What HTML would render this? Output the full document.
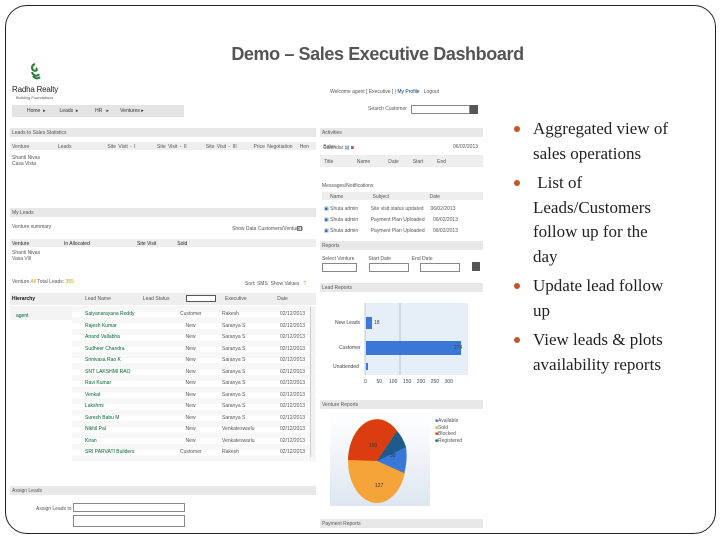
<!DOCTYPE html>
<html><head><meta charset="utf-8"><style>
*{margin:0;padding:0;box-sizing:border-box}
body{width:720px;height:540px;background:#fff;position:relative;overflow:hidden;font-family:"Liberation Sans",sans-serif}
.a{position:absolute}
.frame{left:5px;top:5px;width:711px;height:529px;border:1.3px solid #222;border-radius:22px}
.title{left:0;width:755px;top:44px;text-align:center;font-size:18px;font-weight:bold;color:#555;letter-spacing:-0.4px}
.t{font-size:5px;color:#555;white-space:nowrap}
.hd{background:#e8e8e8;height:9px}
.bul{left:512px;font-family:"Liberation Serif",serif;font-size:17px;color:#222;line-height:24.5px}
.dot{width:6px;height:6px;border-radius:50%;background:#c0562a;position:absolute;left:-19px;top:9px}
.cb{width:5px;height:5px;border:1px solid #777;position:absolute}
</style></head><body>
<div class="a frame"></div>
<div class="a title">Demo – Sales Executive Dashboard</div>

<svg class="a" style="left:27px;top:62px" width="16" height="20"><path d="M8 2c-3 1-4 4-2 6 3 2 5 0 3-2M5 10c1 4 6 5 7 2M6 14c2 3 5 3 7 1" stroke="#2a7a3a" stroke-width="2" fill="none"/></svg>
<div class="a" style="left:12px;top:85px;font-size:8px;color:#222;letter-spacing:-0.2px">Radha Realty</div>
<div class="a t" style="left:16px;top:95px;font-size:4px">Building Foundations</div>
<div class="a t" style="left:330px;top:89px">Welcome agent [ Executive ] | <span style="color:#036">My Profile</span> &nbsp; Logout</div>
<div class="a" style="left:12px;top:105px;width:172px;height:12px;background:#e4e4e4"></div>
<div class="a t" style="left:27px;top:108px;color:#333">Home &nbsp;▸ &nbsp;&nbsp;&nbsp;&nbsp;&nbsp;&nbsp;&nbsp;&nbsp; Leads &nbsp;▸ &nbsp;&nbsp;&nbsp;&nbsp;&nbsp;&nbsp;&nbsp;&nbsp;&nbsp;&nbsp; HR &nbsp;&nbsp;▸ &nbsp;&nbsp;&nbsp;&nbsp;&nbsp;&nbsp; Ventures ▸</div>
<div class="a t" style="left:368px;top:106px">Search Customer</div>
<div class="a" style="left:411px;top:105px;width:59px;height:9px;border:1px solid #888"></div>
<div class="a" style="left:470px;top:105px;width:8px;height:9px;background:#555"></div>

<div class="a hd" style="left:10px;top:128px;width:306px"></div>
<div class="a t" style="left:12px;top:130px">Leads to Sales Statistics</div>
<div class="a" style="left:10px;top:142px;width:306px;height:8px;background:#eee"></div>
<div class="a t" style="left:12px;top:144px;word-spacing:1px">Venture &nbsp;&nbsp;&nbsp;&nbsp;&nbsp;&nbsp;&nbsp;&nbsp;&nbsp;&nbsp; Leads &nbsp;&nbsp;&nbsp;&nbsp;&nbsp;&nbsp;&nbsp;&nbsp;&nbsp;&nbsp;&nbsp;&nbsp;&nbsp; Site Visit - I &nbsp;&nbsp;&nbsp;&nbsp;&nbsp;&nbsp;&nbsp; Site Visit - II &nbsp;&nbsp;&nbsp;&nbsp;&nbsp;&nbsp; Site Visit - III &nbsp;&nbsp;&nbsp;&nbsp;&nbsp; Price Negotiation &nbsp; Hen &nbsp;&nbsp;&nbsp;&nbsp; Sales</div>
<div class="a t" style="left:12px;top:155px">Shanti Nivas<br>Casa Vista</div>

<div class="a hd" style="left:10px;top:208px;width:306px"></div>
<div class="a t" style="left:12px;top:210px">My Leads</div>
<div class="a t" style="left:12px;top:224px">Venture summary</div>
<div class="a t" style="left:232px;top:226px">Show Data Customers/Ventures</div>
<div class="a cb" style="left:297px;top:226px"></div>
<div class="a" style="left:10px;top:239px;width:306px;height:8px;background:#eee"></div>
<div class="a t" style="left:12px;top:241px;color:#222">Venture &nbsp;&nbsp;&nbsp;&nbsp;&nbsp;&nbsp;&nbsp;&nbsp;&nbsp;&nbsp;&nbsp;&nbsp;&nbsp;&nbsp;&nbsp;&nbsp;&nbsp;&nbsp;&nbsp;&nbsp;&nbsp;&nbsp;&nbsp; In Allocated &nbsp;&nbsp;&nbsp;&nbsp;&nbsp;&nbsp;&nbsp;&nbsp;&nbsp;&nbsp;&nbsp;&nbsp;&nbsp;&nbsp;&nbsp;&nbsp;&nbsp;&nbsp;&nbsp;&nbsp;&nbsp;&nbsp;&nbsp;&nbsp;&nbsp;&nbsp;&nbsp;&nbsp;&nbsp;&nbsp;&nbsp;&nbsp; Site Visit &nbsp;&nbsp;&nbsp;&nbsp;&nbsp;&nbsp;&nbsp;&nbsp;&nbsp;&nbsp;&nbsp;&nbsp;&nbsp; Sold</div>
<div class="a t" style="left:12px;top:250px">Shanti Nivas<br>Vasa Vill</div>
<div class="a t" style="left:12px;top:279px">Venture <span style="color:#c90">All</span> Total Leads: <span style="color:#c90">355</span></div>
<div class="a t" style="left:245px;top:281px">Sort: SMS &nbsp;Show Values &nbsp; <span style="color:#c90">?</span></div>

<div class="a" style="left:10px;top:293px;width:306px;height:12px;background:#eee"></div>
<div class="a t" style="left:12px;top:296px;color:#111;font-weight:bold">Hierarchy</div>
<div class="a t" style="left:85px;top:296px">Lead Name &nbsp;&nbsp;&nbsp;&nbsp;&nbsp;&nbsp;&nbsp;&nbsp;&nbsp;&nbsp;&nbsp;&nbsp;&nbsp;&nbsp;&nbsp;&nbsp;&nbsp;&nbsp;&nbsp;&nbsp;&nbsp; Lead Status</div>
<div class="a" style="left:186px;top:295px;width:30px;height:7px;border:1px solid #555;background:#fff"></div>
<div class="a t" style="left:225px;top:296px">Executive &nbsp;&nbsp;&nbsp;&nbsp;&nbsp;&nbsp;&nbsp;&nbsp;&nbsp;&nbsp;&nbsp;&nbsp;&nbsp;&nbsp;&nbsp;&nbsp;&nbsp;&nbsp;&nbsp;&nbsp; Date</div>
<div class="a" style="left:10px;top:306px;width:62px;height:14px;background:#f4f4f4"></div>
<div class="a t" style="left:16px;top:313px;color:#063">agent</div>
<div class="a" style="left:72px;top:306px;width:244px;height:157px;background:repeating-linear-gradient(#f7f7f7 0 6px,#fff 6px 11.5px)"></div>
<div class="a" style="left:310px;top:307px;width:5px;height:150px;border-left:1px solid #ccc;background:#f2f2f2"></div>
<div class="a t" style="left:85px;top:309px;line-height:11.5px;color:#063">Satyanarayana Reddy<br>Rajesh Kumar<br>Anand Vallabha<br>Sudheer Chandra<br>Srinivasa Rao K<br>SNT LAKSHMI RAO<br>Ravi Kumar<br>Venkat<br>Lakshmi<br>Suresh Babu M<br>Nikhil Pal<br>Kiran<br>SRI PARVATI Builders</div>
<div class="a t" style="left:180px;top:309px;line-height:11.5px">Customer<br>&nbsp;&nbsp;&nbsp;&nbsp;New<br>&nbsp;&nbsp;&nbsp;&nbsp;New<br>&nbsp;&nbsp;&nbsp;&nbsp;New<br>&nbsp;&nbsp;&nbsp;&nbsp;New<br>&nbsp;&nbsp;&nbsp;&nbsp;New<br>&nbsp;&nbsp;&nbsp;&nbsp;New<br>&nbsp;&nbsp;&nbsp;&nbsp;New<br>&nbsp;&nbsp;&nbsp;&nbsp;New<br>&nbsp;&nbsp;&nbsp;&nbsp;New<br>&nbsp;&nbsp;&nbsp;&nbsp;New<br>&nbsp;&nbsp;&nbsp;&nbsp;New<br>Customer</div>
<div class="a t" style="left:222px;top:309px;line-height:11.5px">Rakesh<br>Saranya S<br>Saranya S<br>Saranya S<br>Saranya S<br>Saranya S<br>Saranya S<br>Saranya S<br>Saranya S<br>Saranya S<br>Venkateswarlu<br>Venkateswarlu<br>Rakesh</div>
<div class="a t" style="left:280px;top:309px;line-height:11.5px">02/12/2013<br>02/12/2013<br>02/12/2013<br>02/12/2013<br>02/12/2013<br>02/12/2013<br>02/12/2013<br>02/12/2013<br>02/12/2013<br>02/12/2013<br>02/12/2013<br>02/12/2013<br>02/12/2013</div>
<div class="a hd" style="left:10px;top:486px;width:306px"></div>
<div class="a t" style="left:12px;top:488px">Assign Leads</div>
<div class="a t" style="left:36px;top:506px">Assign Leads to</div>
<div class="a" style="left:73px;top:503px;width:112px;height:9px;border:1px solid #888"></div>
<div class="a" style="left:73px;top:515px;width:112px;height:12px;border:1px solid #888"></div>

<div class="a hd" style="left:320px;top:128px;width:163px"></div>
<div class="a t" style="left:322px;top:130px">Activities</div>
<div class="a t" style="left:323px;top:145px">Calendar <span style="color:#36a">▤</span> <span style="color:#a44">◙</span></div>
<div class="a t" style="left:453px;top:144px">06/02/2013</div>
<div class="a" style="left:320px;top:155px;width:163px;height:12px;background:#eee"></div>
<div class="a t" style="left:324px;top:159px">Title &nbsp;&nbsp;&nbsp;&nbsp;&nbsp;&nbsp;&nbsp;&nbsp;&nbsp;&nbsp;&nbsp;&nbsp;&nbsp;&nbsp;&nbsp; Name &nbsp;&nbsp;&nbsp;&nbsp;&nbsp;&nbsp;&nbsp;&nbsp;&nbsp;&nbsp;&nbsp; Date &nbsp;&nbsp;&nbsp;&nbsp;&nbsp;&nbsp;&nbsp;&nbsp; Start &nbsp;&nbsp;&nbsp;&nbsp;&nbsp;&nbsp;&nbsp;&nbsp; End</div>
<div class="a t" style="left:322px;top:183px">Messages/Notifications</div>
<div class="a" style="left:322px;top:192px;width:161px;height:8px;background:#eee"></div>
<div class="a t" style="left:330px;top:194px">Name &nbsp;&nbsp;&nbsp;&nbsp;&nbsp;&nbsp;&nbsp;&nbsp;&nbsp;&nbsp;&nbsp;&nbsp;&nbsp;&nbsp;&nbsp;&nbsp;&nbsp;&nbsp;&nbsp; Subject &nbsp;&nbsp;&nbsp;&nbsp;&nbsp;&nbsp;&nbsp;&nbsp;&nbsp;&nbsp;&nbsp;&nbsp;&nbsp;&nbsp;&nbsp;&nbsp;&nbsp;&nbsp;&nbsp;&nbsp;&nbsp;&nbsp;&nbsp;&nbsp;&nbsp;&nbsp;&nbsp; Date</div>
<div class="a t" style="left:324px;top:204px;line-height:11px"><span style="color:#36a">▣</span> Shuta admin &nbsp;&nbsp;&nbsp;&nbsp;&nbsp;&nbsp;&nbsp; Site visit status updated &nbsp;&nbsp;&nbsp; 06/02/2013<br><span style="color:#36a">▣</span> Shuta admin &nbsp;&nbsp;&nbsp;&nbsp;&nbsp;&nbsp;&nbsp; Payment Plan Uploaded &nbsp;&nbsp;&nbsp;&nbsp; 06/02/2013<br><span style="color:#36a">▣</span> Shuta admin &nbsp;&nbsp;&nbsp;&nbsp;&nbsp;&nbsp;&nbsp; Payment Plan Uploaded &nbsp;&nbsp;&nbsp;&nbsp; 06/02/2013</div>
<div class="a hd" style="left:320px;top:241px;width:163px"></div>
<div class="a t" style="left:322px;top:243px">Reports</div>
<div class="a t" style="left:322px;top:256px">Select Venture &nbsp;&nbsp;&nbsp;&nbsp;&nbsp;&nbsp;&nbsp;&nbsp; Start Date &nbsp;&nbsp;&nbsp;&nbsp;&nbsp;&nbsp;&nbsp;&nbsp;&nbsp;&nbsp;&nbsp;&nbsp;&nbsp; End Date</div>
<div class="a" style="left:322px;top:263px;width:35px;height:9px;border:1px solid #888"></div>
<div class="a" style="left:369px;top:263px;width:40px;height:9px;border:1px solid #888"></div>
<div class="a" style="left:420px;top:263px;width:40px;height:9px;border:1px solid #888"></div>
<div class="a" style="left:472px;top:262px;width:8px;height:9px;background:#555"></div>
<div class="a hd" style="left:320px;top:283px;width:163px"></div>
<div class="a t" style="left:322px;top:285px">Lead Reports</div>
<svg class="a" style="left:330px;top:300px" width="155" height="90">
<rect x="35" y="3" width="103" height="72" fill="#e6eef8"/>
<line x1="70" y1="3" x2="70" y2="75" stroke="#999" stroke-width=".5"/>
<line x1="35" y1="3" x2="35" y2="75" stroke="#999" stroke-width=".5"/>
<rect x="36" y="17" width="6" height="12" fill="#3a78d8"/>
<rect x="36" y="41" width="95" height="14" fill="#3a78d8"/>
<rect x="36" y="63" width="2" height="7" fill="#3a78d8"/>
<g font-size="5" fill="#444" font-family="Liberation Sans"><text x="5" y="24">New Leads</text><text x="9" y="49">Customer</text><text x="3" y="68">Unattended</text>
<text x="44" y="24">18</text><text x="124" y="49">274</text>
<text x="34" y="83">0 &#160;&#160;&#160;&#160;&#160; 50 &#160;&#160;&#160; 100 &#160;&#160; 150 &#160;&#160; 200 &#160;&#160; 250 &#160;&#160; 300</text></g>
</svg>
<div class="a hd" style="left:320px;top:400px;width:163px"></div>
<div class="a t" style="left:322px;top:402px">Venture Reports</div>
<div class="a" style="left:330px;top:414px;width:100px;height:92px;background:linear-gradient(#fff,#dde6f0)"></div>
<svg class="a" style="left:345px;top:415px" width="65" height="92">
<ellipse cx="32" cy="46" rx="29" ry="42" fill="#f5a43a"/>
<path d="M32 46 L3 45 A29 42 0 0 1 52 16 Z" fill="#d93d10"/>
<path d="M32 46 L52 16 A29 42 0 0 1 61 32 L61 45 Z" fill="#1e5a8a"/>
<path d="M32 46 L61 32 A29 42 0 0 1 59 58 Z" fill="#3a78d8"/>
<g font-size="5" fill="#333"><text x="24" y="32">150</text><text x="45" y="42">30</text><text x="30" y="72">127</text></g>
</svg>
<div class="a t" style="left:435px;top:418px;line-height:6.5px"><span style="color:#3a78d8">■</span>Available<br><span style="color:#f5a43a">■</span>Sold<br><span style="color:#d93d10">■</span>Blocked<br><span style="color:#1e5a8a">■</span>Registered</div>
<div class="a hd" style="left:320px;top:519px;width:163px"></div>
<div class="a t" style="left:322px;top:521px">Payment Reports</div>

<div class="a bul" style="top:117px;left:533px">
<div style="position:relative"><span class="dot"></span>Aggregated view of<br>sales operations</div>
<div style="position:relative;margin-top:5px"><span class="dot"></span>&nbsp;List of<br>Leads/Customers<br>follow up for the<br>day</div>
<div style="position:relative;margin-top:5px"><span class="dot"></span>Update lead follow<br>up</div>
<div style="position:relative;margin-top:5px"><span class="dot"></span>View leads &amp; plots<br>availability reports</div>
</div>
</body></html>
